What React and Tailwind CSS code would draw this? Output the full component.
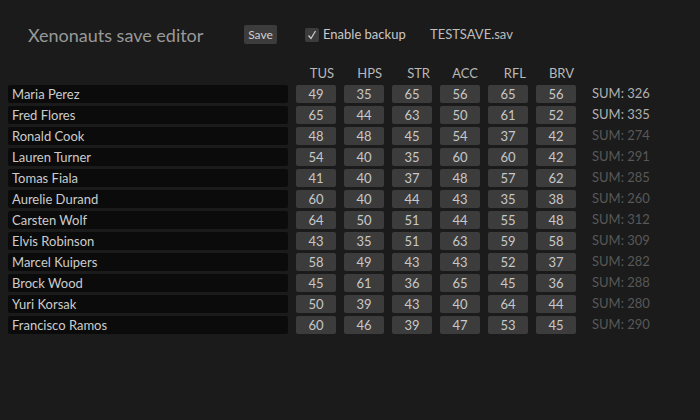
import React from "react";

const soldiers = [
  ["Maria Perez", [49, 35, 65, 56, 65, 56], true],
  ["Fred Flores", [65, 44, 63, 50, 61, 52], true],
  ["Ronald Cook", [48, 48, 45, 54, 37, 42], false],
  ["Lauren Turner", [54, 40, 35, 60, 60, 42], false],
  ["Tomas Fiala", [41, 40, 37, 48, 57, 62], false],
  ["Aurelie Durand", [60, 40, 44, 43, 35, 38], false],
  ["Carsten Wolf", [64, 50, 51, 44, 55, 48], false],
  ["Elvis Robinson", [43, 35, 51, 63, 59, 58], false],
  ["Marcel Kuipers", [58, 49, 43, 43, 52, 37], false],
  ["Brock Wood", [45, 61, 36, 65, 45, 36], false],
  ["Yuri Korsak", [50, 39, 43, 40, 64, 44], false],
  ["Francisco Ramos", [60, 46, 39, 47, 53, 45], false],
];

const stats = ["TUS", "HPS", "STR", "ACC", "RFL", "BRV"];

export default function App() {
  return (
    <div
      className="w-[700px] h-[420px] bg-[#1b1b1b] text-[#c8c8c8] pt-[25px] pl-[8px]"
      style={{ fontFamily: "Lato, 'Noto Sans', sans-serif" }}
    >
      <div className="flex items-center h-[19px] pl-[20px]">
        <div className="w-[216px] text-[18px] text-[#999999] leading-none">Xenonauts save editor</div>
        <button className="h-[19px] w-[33px] bg-[#3c3c3c] rounded-[2px] text-[12px] text-[#cfcfcf]">
          Save
        </button>
        <div className="flex items-center ml-[28px]">
          <span className="w-[14px] h-[14px] bg-[#3c3c3c] rounded-[2px] flex items-center justify-center">
            <svg width="10" height="10" viewBox="0 0 10 10">
              <path d="M1.5 5.5 L4 8.5 L8.5 1" fill="none" stroke="#d0d0d0" strokeWidth="1.2" />
            </svg>
          </span>
          <span className="ml-[4px] text-[13px] w-[107px]">Enable backup</span>
          <span className="text-[13px] text-[#bdbdbd]">TESTSAVE.sav</span>
        </div>
      </div>

      <div className="flex mt-[21px] h-[20px] items-start text-[13px] text-[#b8b8b8]">
        <div className="w-[288px]" />
        {stats.map((s) => (
          <div key={s} className="w-[40px] mr-[8px] text-right pr-[2px] leading-[16px]">
            {s}
          </div>
        ))}
      </div>

      <div className="flex flex-col gap-[3px]">
        {soldiers.map(([name, vals, bright]) => (
          <div key={name} className="flex items-center h-[18px] text-[13px]">
            <div className="w-[280px] h-[18px] bg-[#0b0b0b] rounded-[2px] pl-[4px] leading-[18px] text-[#cccccc]">
              {name}
            </div>
            <div className="flex gap-[8px] ml-[8px]">
              {vals.map((v, i) => (
                <div
                  key={i}
                  className="w-[40px] h-[18px] bg-[#3c3c3c] rounded-[2px] text-center leading-[18px] text-[#c8c8c8]"
                >
                  {v}
                </div>
              ))}
            </div>
            <div className={"ml-[16px] " + (bright ? "text-[#b0b0b0]" : "text-[#585858]")}>
              SUM: {vals.reduce((a, b) => a + b, 0)}
            </div>
          </div>
        ))}
      </div>
    </div>
  );
}
